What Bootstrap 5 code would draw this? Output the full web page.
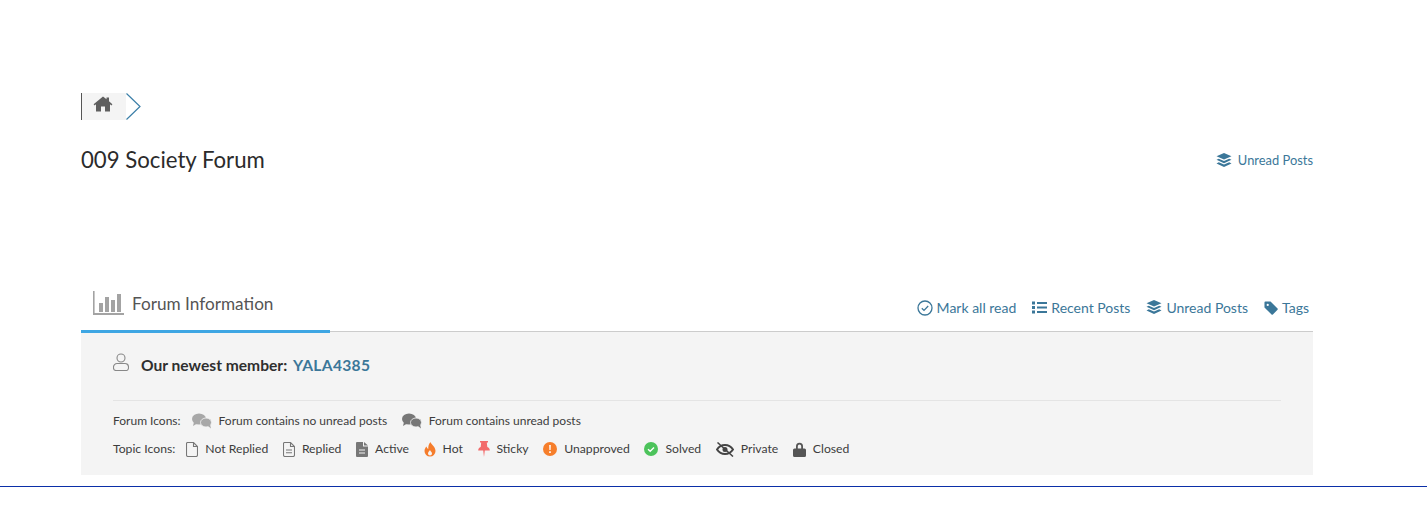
<!DOCTYPE html>
<html lang="en">
<head>
    <meta charset="UTF-8">
    <meta name="viewport" content="width=device-width, initial-scale=1.0">
    <title>009 Society Forum</title>
    <link href="https://cdn.jsdelivr.net/npm/bootstrap@5.3.0/dist/css/bootstrap.min.css" rel="stylesheet">
    <style>
        body {
            font-family: "Lato", "Liberation Sans", sans-serif;
            background: #fff;
            color: #333;
        }
        a { color: #3b7799; text-decoration: none; }
        .page-wrap {
            padding: 93px 114px 0 81px;
        }
        .crumb-row { height: 27px; }
        .crumb-home {
            width: 45px;
            background: #f4f4f4;
            border-left: 1px solid #555;
            padding-left: 11px;
        }
        .crumb-home svg { margin-bottom: 5px; }
        .title-row { margin-top: 26px; height: 30px; }
        .forum-title { font-size: 22.2px; font-weight: 400; color: #2b2b2b; margin: -2px 0 0; }
        .unread-top { font-size: 12.9px; gap: 6px; }
        .info-head {
            margin-top: 105px;
            height: 51px;
            border-bottom: 1px solid #ccc;
        }
        .info-tab {
            width: 249px;
            height: 52px;
            border-bottom: 3px solid #3ea6e3;
            padding: 10px 0 0 12px;
            color: #555;
            font-size: 17.2px;
            margin-bottom: -1px;
        }
        .head-links { font-size: 14px; padding: 16px 4px 0 0; gap: 16px; }
        .info-panel {
            background: #f4f4f4;
            height: 143px;
            padding: 20px 32px 0 32px;
        }
        .newest-row { height: 28px; font-size: 15.6px; font-weight: 700; color: #2f2f2f; }
        .newest-row svg { margin-top: -8px; }
        .newest-row a { font-weight: 700; letter-spacing: .3px; margin-left: 2px; }
        .legend-rule { border-top: 1px solid #e4e4e4; margin-top: 20px; padding-top: 6px; }
        .legend-row { height: 28px; font-size: 12.2px; color: #3d3d3d; }
        .legend-forum { font-size: 12px; }
        .legend-row span { white-space: nowrap; }
        .legend-label { margin-right: 11px; }
        .legend-row svg { margin-right: 7px; flex-shrink: 0; }
        .legend-item { margin-right: 14.6px; }
        .bottom-line { margin-top: 11px; border-top: 1px solid #0b2fa8; }
    </style>
</head>
<body>
    <div class="page-wrap">
        <!-- breadcrumb -->
        <div class="crumb-row d-flex">
            <div class="crumb-home d-flex align-items-center">
                <svg width="20" height="16" viewBox="0 0 20 16"><path fill="#5f5f5f" d="M10 0.500 0.600 8.200l1 1.200L3 8.300V15.500h5v-5h4v5h5V8.300l1.400 1.100 1-1.200L16 5.300V1.500h-2.500v1.700z"/></svg>
            </div>
            <svg width="16" height="27" viewBox="0 0 16 27"><path fill="none" stroke="#3b7fa8" stroke-width="1.2" d="M0.500 0.500 14 13.500 0.500 26.500"/></svg>
        </div>

        <div class="title-row d-flex justify-content-between align-items-center">
            <h1 class="forum-title">009 Society Forum</h1>
            <a href="#" class="unread-top d-flex align-items-center">
                <svg width="16" height="15" viewBox="0 0 16 15"><path fill="#3b7799" d="M8 0 15.500 3.200 8 6.600 0.500 3.200zM2.800 5.700 8 8l5.200-2.300 2.300 1.100L8 10.200.5 6.800zM2.800 9.300 8 11.600l5.200-2.300 2.300 1.100L8 14 .5 10.400z"/></svg>
                Unread Posts
            </a>
        </div>

        <!-- forum information -->
        <div class="info-head d-flex justify-content-between">
            <div class="info-tab d-flex align-items-start gap-2">
                <svg width="31" height="24" viewBox="0 0 31 24" class="flex-shrink-0"><path fill="#a3a3a3" d="M0 0h1.600v22H31v2H0zM6 12h4v9H6zM12 6h4v15h-4zM18 9h4v12h-4zM24 3h4v18h-4z"/></svg>
                <span>Forum Information</span>
            </div>
            <div class="head-links d-flex align-items-start">
                <a href="#" class="d-flex align-items-center gap-1">
                    <svg width="16" height="16" viewBox="0 0 16 16"><circle cx="8" cy="8" r="7" fill="none" stroke="#3b7799" stroke-width="1.3"/><path fill="none" stroke="#3b7799" stroke-width="1.3" d="M4.800 8.300 7 10.400l4.200-4.400"/></svg>
                    Mark all read
                </a>
                <a href="#" class="d-flex align-items-center gap-1">
                    <svg width="15" height="13" viewBox="0 0 15 13"><path fill="#3b7799" d="M0 .5h3v3H0zM0 5h3v3H0zM0 9.500h3v3H0zM5 1h10v2H5zM5 5.500h10v2H5zM5 10h10v2H5z"/></svg>
                    Recent Posts
                </a>
                <a href="#" class="d-flex align-items-center gap-1">
                    <svg width="16" height="15" viewBox="0 0 16 15"><path fill="#3b7799" d="M8 0 15.500 3.200 8 6.600 0.500 3.200zM2.800 5.700 8 8l5.200-2.300 2.300 1.100L8 10.200.5 6.800zM2.800 9.300 8 11.600l5.200-2.300 2.300 1.100L8 14 .5 10.400z"/></svg>
                    Unread Posts
                </a>
                <a href="#" class="d-flex align-items-center">
                    <svg class="me-1" width="14" height="14" viewBox="0 0 15 15"><path fill="#3b7799" d="M0.500 1.500a1 1 0 0 1 1-1H7l7.500 7.500a1 1 0 0 1 0 1.400l-5 5a1 1 0 0 1-1.400 0L0.500 7zM4 3a1.200 1.200 0 1 0 0 2.400A1.200 1.200 0 0 0 4 3z"/></svg>
                    Tags
                </a>
            </div>
        </div>

        <div class="info-panel">
            <div class="newest-row d-flex align-items-center">
                <svg class="me-2 flex-shrink-0" width="16" height="18" viewBox="0 0 16 18"><circle cx="8" cy="5" r="4" fill="none" stroke="#888" stroke-width="1.1"/><path fill="none" stroke="#888" stroke-width="1.1" d="M4 10.500h8a3.500 3.500 0 0 1 3.500 3.500v1a2.500 2.500 0 0 1-2.500 2.500H3A2.500 2.500 0 0 1 .5 15v-1A3.500 3.500 0 0 1 4 10.500z"/></svg>
                <span class="ms-1">Our newest member: <a href="#">YALA4385</a></span>
            </div>
            <div class="legend-rule">
                <div class="legend-row legend-forum d-flex align-items-center">
                    <span class="legend-label">Forum Icons:</span>
                    <svg width="20" height="16" viewBox="0 0 20 16"><ellipse cx="7" cy="6" rx="7" ry="5.500" fill="#a8a8a8"/><path fill="#a8a8a8" d="M2 9 1 13l5-3z"/><ellipse cx="14" cy="9.500" rx="5.500" ry="4.500" fill="#a8a8a8" stroke="#f4f4f4" stroke-width=".8"/><path fill="#a8a8a8" d="M16 13l3 2.500-1-4z"/></svg>
                    <span class="legend-item">Forum contains no unread posts</span>
                    <svg width="20" height="16" viewBox="0 0 20 16"><ellipse cx="7" cy="6" rx="7" ry="5.500" fill="#777"/><path fill="#777" d="M2 9 1 13l5-3z"/><ellipse cx="14" cy="9.500" rx="5.500" ry="4.500" fill="#777" stroke="#f4f4f4" stroke-width=".8"/><path fill="#777" d="M16 13l3 2.500-1-4z"/></svg>
                    <span>Forum contains unread posts</span>
                </div>
                <div class="legend-row d-flex align-items-center">
                    <span class="legend-label">Topic Icons:</span>
                    <svg width="12" height="15" viewBox="0 0 12 15"><path fill="none" stroke="#777" stroke-width="1.1" d="M1.500.5h6l4 4v8.500a1.500 1.500 0 0 1-1.500 1.500H2A1.500 1.500 0 0 1 .5 13V1.500a1 1 0 0 1 1-1zM7.500.5v4h4"/></svg>
                    <span class="legend-item">Not Replied</span>
                    <svg width="12" height="15" viewBox="0 0 12 15"><path fill="none" stroke="#777" stroke-width="1.1" d="M1.500.5h6l4 4v8.500a1.500 1.500 0 0 1-1.500 1.500H2A1.500 1.500 0 0 1 .5 13V1.500a1 1 0 0 1 1-1zM7.500.5v4h4M3 8h6M3 10.800h6"/></svg>
                    <span class="legend-item">Replied</span>
                    <svg width="12" height="15" viewBox="0 0 12 15"><path fill="#777" d="M1 0h6v4.500h5V14a1 1 0 0 1-1 1H1a1 1 0 0 1-1-1V1a1 1 0 0 1 1-1zM8 0l4 3.500H8zM3 7.500v1h6v-1zM3 10.500v1h6v-1z"/></svg>
                    <span class="legend-item">Active</span>
                    <svg width="12" height="15" viewBox="0 0 12 15"><path fill="#f57c2b" d="M6.500 0c.5 2.500 5 4.500 5 9a5.500 5.500 0 0 1-11 0c0-2 1-3.500 2-4.500.3 1.200.8 2 1.800 2.500C4 4.500 4.800 2 6.500 0zM6 8c-.5 1.200-2 1.800-2 3.500a2 2 0 0 0 4 0C8 10 6.500 9.500 6 8z"/></svg>
                    <span class="legend-item">Hot</span>
                    <svg width="12" height="16" viewBox="0 0 12 16"><path fill="#f26a6a" d="M2 0h8v1.500H8.800l.5 4.500c1.500.7 2.500 1.800 2.500 3.500H6.800L6 16l-.8-6.500H.2C.2 7.800 1.200 6.700 2.700 6l.5-4.500H2z"/></svg>
                    <span class="legend-item">Sticky</span>
                    <svg width="14" height="14" viewBox="0 0 14 14"><circle cx="7" cy="7" r="7" fill="#f67e2b"/><path fill="#fff" d="M6.200 3h1.600l-.2 5H6.400zM6.200 9.300h1.600v1.600H6.200z"/></svg>
                    <span class="legend-item">Unapproved</span>
                    <svg width="14" height="14" viewBox="0 0 14 14"><circle cx="7" cy="7" r="7" fill="#4cc35b"/><path fill="none" stroke="#fff" stroke-width="1.400" d="M4 7.200l2.200 2.100L10 5.400"/></svg>
                    <span class="legend-item">Solved</span>
                    <svg width="18" height="15" viewBox="0 0 18 15"><path fill="none" stroke="#444" stroke-width="2" d="M1 7.500C3 4.500 5.800 3 9 3s6 1.500 8 4.500c-2 3-4.800 4.500-8 4.500S3 10.500 1 7.500z"/><circle cx="9" cy="7.500" r="2.500" fill="#444"/><path stroke="#444" stroke-width="1.500" d="M1.500.5 17 14.500"/></svg>
                    <span class="legend-item">Private</span>
                    <svg width="13" height="15" viewBox="0 0 13 15"><path fill="#555" d="M3 6.500V4.200a3.500 3.500 0 0 1 7 0v2.300h1.500A1.500 1.500 0 0 1 13 8v5.500a1.500 1.500 0 0 1-1.500 1.500h-10A1.500 1.500 0 0 1 0 13.500V8a1.500 1.500 0 0 1 1.500-1.500zM4.800 6.500h3.400V4.200a1.700 1.700 0 0 0-3.400 0z"/></svg>
                    <span>Closed</span>
                </div>
            </div>
        </div>
    </div>
    <div class="bottom-line"></div>
    <script src="https://cdn.jsdelivr.net/npm/bootstrap@5.3.0/dist/js/bootstrap.bundle.min.js"></script>
</body>
</html>
